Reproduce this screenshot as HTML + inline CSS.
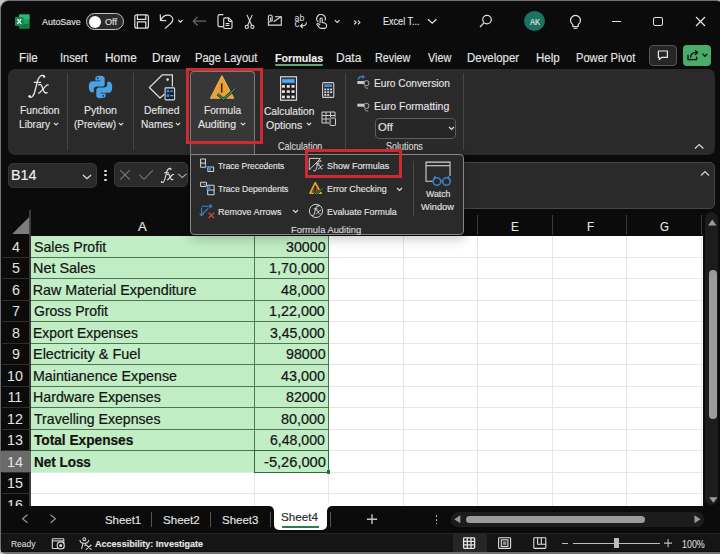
<!DOCTYPE html><html><head><meta charset="utf-8"><style>
html,body{margin:0;padding:0;}
body{width:720px;height:554px;overflow:hidden;position:relative;background:#c4c4cc;font-family:"Liberation Sans",sans-serif;}
.a{position:absolute;}
.t{position:absolute;white-space:nowrap;line-height:1;-webkit-text-stroke:0.12px currentColor;}
.n{-webkit-text-stroke:0;}
.d{-webkit-text-stroke:0.22px currentColor;}
</style></head><body>
<div class="a" style="left:0;top:0;width:725px;height:554px;background:#717171;border-radius:9px 9px 6px 6px;"></div>
<div class="a" style="left:1.2px;top:1.2px;width:722.6px;height:551.2px;background:#0b0b0b;border-radius:8px 8px 5px 5px;"></div>
<svg class="a" style="left:15px;top:14px;" width="15" height="15" viewBox="0 0 15 15"><rect x="4" y="0.5" width="10.5" height="14" rx="1.2" fill="#1d9f5c"/><rect x="4" y="0.5" width="10.5" height="4.7" fill="#2bb673"/><rect x="4" y="9.8" width="10.5" height="4.7" fill="#137a43"/><rect x="0" y="3" width="8.5" height="9" rx="1" fill="#168a4a"/><path d="M2.3 5.2 L6.2 9.8 M6.2 5.2 L2.3 9.8" stroke="#fff" stroke-width="1.3"/></svg>
<div class="t " style="left:42.00px;top:16.96px;font-size:9.5px;color:#e6e6e6;transform:scaleX(0.9390);transform-origin:0 0;">AutoSave</div>
<div class="a" style="left:86px;top:12.5px;width:38px;height:17.5px;box-sizing:border-box;border:1.4px solid #c4c4c4;border-radius:9px;background:#2b2b2b;"></div>
<div class="a" style="left:89px;top:15.5px;width:12px;height:12px;background:#fff;border-radius:50%;"></div>
<div class="t " style="left:105.00px;top:16.70px;font-size:9.8px;color:#e6e6e6;transform:scaleX(0.9286);transform-origin:0 0;">Off</div>
<svg class="a" style="left:133px;top:13px;" width="17" height="17" viewBox="133 13 17 17"><g fill="none" stroke="#dedede" stroke-width="1.2"><rect x="134.8" y="14.8" width="13.6" height="13.4" rx="2"/><path d="M137.4 14.8 V19.3 H145.8 V14.8 M137.4 28.2 V21.9 H145.8 V28.2"/></g></svg>
<svg class="a" style="left:158px;top:13px;" width="17" height="17" viewBox="158 13 17 17"><g fill="none" stroke="#dedede" stroke-width="1.2" stroke-linecap="round"><path d="M160.3 14.9 L160.5 20.4 L165.8 20.6"/><path d="M160.7 20.2 C162.5 16.6 165 15.1 167.6 15.1 C170.6 15.1 172.8 17.1 172.8 19.5 C172.8 21 172.1 22 171.1 23 L165.2 28.4"/></g></svg>
<svg class="a" style="left:176px;top:18px;" width="8" height="6" viewBox="176 18 8 6"><path d="M178.3 20 L180.4 22.2 L182.5 20" fill="none" stroke="#dedede" stroke-width="1.1"/></svg>
<svg class="a" style="left:191px;top:15px;" width="17" height="12" viewBox="191 15 17 12"><path d="M206 21.2 H193.4 M197.6 16.9 L193.3 21.2 L197.6 25.5" fill="none" stroke="#6c6c6c" stroke-width="1.2"/></svg>
<svg class="a" style="left:216px;top:13px;" width="18" height="17" viewBox="216 13 18 17"><g fill="none" stroke="#dedede" stroke-width="1.15"><path d="M223.4 14.6 H219.6 Q218 14.6 218 16.2 V25 Q218 26.6 219.6 26.6 H223"/><path d="M225 17.8 H228.6 L232 21.2 V27.3 Q232 28.5 230.8 28.5 H224.9 Q223.7 28.5 223.7 27.3 V19.1 Q223.7 17.8 225 17.8 Z"/><path d="M228.4 17.9 V20 Q228.4 21.3 229.7 21.3 H231.9"/><path d="M225.6 23.6 H229.4 M225.6 25.5 H229.4"/></g></svg>
<svg class="a" style="left:244px;top:14px;" width="12" height="16" viewBox="244 14 12 16"><g fill="none" stroke="#dedede" stroke-width="1.1"><path d="M247 14.9 L251.6 25.2 M252.3 14.9 L247.7 25.2"/><circle cx="246.8" cy="26.9" r="1.6"/><circle cx="252.4" cy="26.9" r="1.6"/></g></svg>
<svg class="a" style="left:267px;top:14px;" width="16" height="13" viewBox="267 14 16 13"><g fill="none" stroke="#dedede" stroke-width="1.1"><path d="M274.8 16.7 H281.3 V25.1 H268.4 V21.8"/><path d="M270.3 22.2 Q268.4 22.2 268.4 20.3 V17 Q268.4 15 270.3 15 Q272.2 15 272.2 17 V20.4 Q272.2 21.2 271.4 21.2 Q270.6 21.2 270.6 20.4 V17.4"/><path d="M273.6 21.8 L281 16.7"/></g></svg>
<svg class="a" style="left:294px;top:14px;" width="14" height="16" viewBox="294 14 14 16"><text x="294.6" y="20.9" font-family="Liberation Sans" font-size="8.8" letter-spacing="0.1" fill="#dedede">ab</text><text x="294.6" y="27.4" font-family="Liberation Sans" font-size="10" fill="#dedede">c</text><path d="M306.3 22.2 Q306.5 25.9 302.6 25.9 H300.6 M302.7 23.7 L300.5 25.9 L302.7 28.1" fill="none" stroke="#dedede" stroke-width="1.1"/></svg>
<svg class="a" style="left:315px;top:14px;" width="13" height="16" viewBox="315 14 13 16"><g fill="none" stroke="#dedede" stroke-width="1.1"><path d="M318.3 22.1 A4.3 4.3 0 1 1 324.9 20.6"/><path d="M320.1 23.3 V19 A1.05 1.05 0 0 1 322.2 19 V22.3 L325 23.2 Q326.8 23.8 326.6 25.8 L326.3 27.2 Q325.9 28.4 324.3 28.4 H321.3 Q320.3 28.4 319.5 27.6 L317.1 24.9 Q316.5 24.1 317.3 23.7 Q318 23.3 318.8 24 L320.1 25.2"/></g></svg>
<svg class="a" style="left:333px;top:18px;" width="8" height="6" viewBox="333 18 8 6"><path d="M334.8 20.1 L337.2 22.5 L339.6 20.1" fill="none" stroke="#dedede" stroke-width="1.1"/></svg>
<svg class="a" style="left:352px;top:19px;" width="10" height="7" viewBox="352 19 10 7"><path d="M354.1 20.4 L356.2 22.4 L354.1 24.4 M357.8 20.4 L359.9 22.4 L357.8 24.4" fill="none" stroke="#dedede" stroke-width="1.1"/></svg>
<div class="t " style="left:383.00px;top:16.37px;font-size:10.9px;color:#e6e6e6;transform:scaleX(0.8318);transform-origin:0 0;">Excel T...</div>
<svg class="a" style="left:427px;top:18px;" width="11" height="7" viewBox="0 0 11 7"><path d="M1 1.2 L5.2 5.2 L9.4 1.2" fill="none" stroke="#e0e0e0" stroke-width="1.3"/></svg>
<svg class="a" style="left:478px;top:14px;" width="15" height="15" viewBox="478 14 15 15"><g fill="none" stroke="#e0e0e0" stroke-width="1.2"><circle cx="487" cy="19.6" r="4.3"/><path d="M483.9 22.8 L480 27"/></g></svg>
<div class="a" style="left:524px;top:11.2px;width:21px;height:20.2px;background:#1d7262;border-radius:50%;"></div>
<div class="t " style="left:529.50px;top:17.92px;font-size:8.6px;color:#eaeaea;transform:scaleX(0.8917);transform-origin:0 0;">AK</div>
<svg class="a" style="left:569px;top:14px;" width="13" height="16" viewBox="0 0 13 16"><path d="M3.8 10.5 A5 5 0 1 1 9.2 10.5 V12.5 H3.8 Z" fill="none" stroke="#e0e0e0" stroke-width="1.2"/><path d="M4.5 14.3 H8.5" stroke="#e0e0e0" stroke-width="1.2"/></svg>
<div class="a" style="left:611.7px;top:20.6px;width:9.5px;height:1.2px;background:#e0e0e0;"></div>
<div class="a" style="left:653px;top:16.7px;width:10px;height:9.6px;box-sizing:border-box;border:1.2px solid #e0e0e0;border-radius:2px;"></div>
<svg class="a" style="left:695px;top:16px;" width="11" height="11" viewBox="0 0 11 11"><path d="M1 1 L10 10 M10 1 L1 10" stroke="#e6e6e6" stroke-width="1.2"/></svg>
<div class="t " style="left:19.03px;top:51.54px;font-size:12px;color:#e8e8e8;transform:scaleX(0.9722);transform-origin:0 0;">File</div>
<div class="t " style="left:59.58px;top:51.54px;font-size:12px;color:#e8e8e8;transform:scaleX(0.9167);transform-origin:0 0;">Insert</div>
<div class="t " style="left:105.01px;top:51.54px;font-size:12px;color:#e8e8e8;transform:scaleX(0.9919);transform-origin:0 0;">Home</div>
<div class="t " style="left:152.00px;top:51.54px;font-size:12px;color:#e8e8e8;">Draw</div>
<div class="t " style="left:195.07px;top:51.54px;font-size:12px;color:#e8e8e8;transform:scaleX(0.9254);transform-origin:0 0;">Page Layout</div>
<div class="t " style="left:375.10px;top:51.54px;font-size:12px;color:#e8e8e8;transform:scaleX(0.8974);transform-origin:0 0;">Review</div>
<div class="t " style="left:427.50px;top:51.54px;font-size:12px;color:#e8e8e8;transform:scaleX(0.9038);transform-origin:0 0;">View</div>
<div class="t " style="left:466.55px;top:51.54px;font-size:12px;color:#e8e8e8;transform:scaleX(0.9537);transform-origin:0 0;">Developer</div>
<div class="t " style="left:535.64px;top:51.54px;font-size:12px;color:#e8e8e8;transform:scaleX(0.9583);transform-origin:0 0;">Help</div>
<div class="t " style="left:575.77px;top:51.54px;font-size:12px;color:#e8e8e8;transform:scaleX(0.9266);transform-origin:0 0;">Power Pivot</div>
<div class="t " style="left:274.50px;top:51.88px;font-size:11.6px;color:#f2f2f2;font-weight:bold;transform:scaleX(0.9231);transform-origin:0 0;">Formulas</div>
<div class="t " style="left:336.00px;top:51.54px;font-size:12px;color:#e8e8e8;">Data</div>
<div class="a" style="left:274.5px;top:64.2px;width:48.5px;height:2px;background:#62a877;border-radius:1px;"></div>
<div class="a" style="left:649.4px;top:45px;width:27.3px;height:20.6px;box-sizing:border-box;border:1px solid #565656;border-radius:4px;background:#262626;"></div>
<svg class="a" style="left:655px;top:48px;" width="16" height="14" viewBox="655 48 16 14"><path d="M658.4 51 H667.4 V57.4 H661.6 L659.3 59.6 V57.4 H658.4 Z" fill="none" stroke="#e6e6e6" stroke-width="1.2" stroke-linejoin="round"/></svg>
<div class="a" style="left:683.3px;top:45px;width:27.6px;height:20.6px;background:#48ad68;border-radius:4px;"></div>
<svg class="a" style="left:685px;top:48px;" width="25" height="14" viewBox="685 48 25 14"><g fill="none" stroke="#0e0e0e" stroke-width="1.3" stroke-linecap="round" stroke-linejoin="round"><path d="M688 55.2 V59.6 H696.6 V57.2"/><path d="M690.6 57.4 Q690.8 52.8 695.2 52.6 H697.4"/><path d="M695.4 50.7 L697.6 52.6 L695.4 54.5"/><path d="M703 54.1 L705 56.2 L707 54.1"/></g></svg>
<div class="a" style="left:8.1px;top:68.9px;width:706.6px;height:86.1px;background:#2a2a2a;border-radius:7px;"></div>
<div class="a" style="left:67.2px;top:72.8px;width:1px;height:77.7px;background:#464646;"></div>
<div class="a" style="left:132.5px;top:72.8px;width:1px;height:77.7px;background:#464646;"></div>
<div class="a" style="left:344.8px;top:72.8px;width:1px;height:77.7px;background:#464646;"></div>
<div class="a" style="left:462.7px;top:72.8px;width:1px;height:77.7px;background:#464646;"></div>
<div class="t " style="left:19.50px;top:104.66px;font-size:10.8px;color:#e6e6e6;transform:scaleX(0.9561);transform-origin:0 0;">Function</div>
<div class="t " style="left:19.00px;top:118.86px;font-size:10.8px;color:#e6e6e6;transform:scaleX(0.9394);transform-origin:0 0;">Library</div>
<div class="t " style="left:84.00px;top:104.66px;font-size:10.8px;color:#e6e6e6;transform:scaleX(0.9818);transform-origin:0 0;">Python</div>
<div class="t " style="left:74.40px;top:118.86px;font-size:10.8px;color:#e6e6e6;transform:scaleX(0.9222);transform-origin:0 0;">(Preview)</div>
<div class="t " style="left:143.50px;top:104.66px;font-size:10.8px;color:#e6e6e6;transform:scaleX(0.9514);transform-origin:0 0;">Defined</div>
<div class="t " style="left:140.50px;top:118.86px;font-size:10.8px;color:#e6e6e6;transform:scaleX(0.9412);transform-origin:0 0;">Names</div>
<div class="a" style="left:190px;top:70.7px;width:65px;height:83.5px;box-sizing:border-box;border:1px solid #7a7a7a;border-bottom:none;border-radius:4px 4px 0 0;background:#373737;"></div>
<div class="t " style="left:203.50px;top:104.66px;font-size:10.8px;color:#e6e6e6;transform:scaleX(0.9375);transform-origin:0 0;">Formula</div>
<div class="t " style="left:197.50px;top:118.86px;font-size:10.8px;color:#e6e6e6;transform:scaleX(0.9744);transform-origin:0 0;">Auditing</div>
<div class="t " style="left:263.70px;top:105.86px;font-size:10.8px;color:#e6e6e6;transform:scaleX(0.9434);transform-origin:0 0;">Calculation</div>
<div class="t " style="left:265.80px;top:119.86px;font-size:10.8px;color:#e6e6e6;transform:scaleX(0.9730);transform-origin:0 0;">Options</div>
<svg class="a" style="left:52.5px;top:122.3px;" width="6" height="4" viewBox="0 0 6 4"><path d="M0.8 0.8 L3 3 L5.2 0.8" fill="none" stroke="#e0e0e0" stroke-width="1.1"/></svg>
<svg class="a" style="left:118px;top:122.3px;" width="6" height="4" viewBox="0 0 6 4"><path d="M0.8 0.8 L3 3 L5.2 0.8" fill="none" stroke="#e0e0e0" stroke-width="1.1"/></svg>
<svg class="a" style="left:174.5px;top:122.3px;" width="6" height="4" viewBox="0 0 6 4"><path d="M0.8 0.8 L3 3 L5.2 0.8" fill="none" stroke="#e0e0e0" stroke-width="1.1"/></svg>
<svg class="a" style="left:239.5px;top:122.3px;" width="6" height="4" viewBox="0 0 6 4"><path d="M0.8 0.8 L3 3 L5.2 0.8" fill="none" stroke="#e0e0e0" stroke-width="1.1"/></svg>
<svg class="a" style="left:305.5px;top:122.3px;" width="6" height="4" viewBox="0 0 6 4"><path d="M0.8 0.8 L3 3 L5.2 0.8" fill="none" stroke="#e0e0e0" stroke-width="1.1"/></svg>
<svg class="a" style="left:0px;top:0px;pointer-events:none;" width="720" height="554" viewBox="0 0 720 554"><g transform="translate(28.3,74.5) scale(1.0) translate(-28.3,-74.5)"><g fill="none" stroke="#e6e6e6" stroke-linecap="round" stroke-width="1.300"><path d="M29.2 96.6 Q30.8 98.3 32.6 96.4 Q34.4 94.2 35.6 88.5 L37.6 80.5 Q39.6 74.8 43.4 75.4"/><path d="M34.3 82.3 H40.5"/><path d="M38.7 84.9 Q40.9 83.5 41.9 86.2 L43.8 91.2 Q44.8 93.8 47.2 92.6"/><path d="M48.2 85 Q47.4 84.6 46.4 85.4 L39.8 92.6 Q39.2 93.3 38.6 93"/></g><circle cx="44" cy="76.6" r="1.25" fill="#e6e6e6"/><circle cx="29.6" cy="96.2" r="1.2" fill="#e6e6e6"/></g></svg>
<svg class="a" style="left:87.5px;top:74.5px;" width="25" height="24" viewBox="0 0 25 24"><path d="M12.3 0.8 C7 0.8 7.4 3 7.4 3 V5.5 H12.5 V6.3 H4.3 C4.3 6.3 0.8 6 0.8 11.8 C0.8 17.5 3.8 17.3 3.8 17.3 H5.8 V14.6 C5.8 14.6 5.7 11.6 8.7 11.6 H13.8 C13.8 11.6 16.7 11.7 16.7 8.8 V3.6 C16.7 3.6 17.1 0.8 12.3 0.8 Z" fill="#4aa2e6"/><path d="M12.7 23.2 C18 23.2 17.6 21 17.6 21 V18.5 H12.5 V17.7 H20.7 C20.7 17.7 24.2 18 24.2 12.2 C24.2 6.5 21.2 6.7 21.2 6.7 H19.2 V9.4 C19.2 9.4 19.3 12.4 16.3 12.4 H11.2 C11.2 12.4 8.3 12.3 8.3 15.2 V20.4 C8.3 20.4 7.9 23.2 12.7 23.2 Z" fill="#4aa2e6"/><circle cx="9.8" cy="3.2" r="0.9" fill="#2a2a2a"/><circle cx="15.2" cy="20.8" r="0.9" fill="#2a2a2a"/></svg>
<svg class="a" style="left:148px;top:73px;" width="29" height="29" viewBox="148 73 29 29"><g fill="none" stroke="#dedede" stroke-width="1.2" stroke-linejoin="round"><path d="M164.2 94.2 L160 98 L149.4 87.5 L162.4 74.8 H172.4 V86.5"/></g><circle cx="167.6" cy="79.6" r="1.3" fill="#dedede"/><rect x="165.1" y="87.9" width="9.5" height="12" rx="0.8" fill="#0e2336" stroke="#dedede" stroke-width="1.1"/><g fill="#3f8fd6"><rect x="166.7" y="89.8" width="2.4" height="2.6"/><rect x="166.7" y="94.3" width="2.4" height="2.6"/></g><g stroke="#8a9aa8" stroke-width="1.1"><path d="M170.2 91.1 H173.2 M170.2 95.6 H173.2"/></g></svg>
<svg class="a" style="left:208px;top:73px;" width="30" height="28" viewBox="208 73 30 28"><path d="M221.9 75.6 L233.8 98.2 H210.4 Z" fill="#e9a135" stroke="#f3c06a" stroke-width="0.9" stroke-linejoin="round"/><path d="M221.7 83.4 V92.6" stroke="#4a2a08" stroke-width="1.7"/><path d="M217.6 94.2 L223.5 99.2 L235.2 88.6" fill="none" stroke="#1a1a1a" stroke-width="2.6"/><path d="M217.6 94.2 L223.5 99.2 L235.2 88.6" fill="none" stroke="#3fb060" stroke-width="1.1"/></svg>
<svg class="a" style="left:279px;top:75px;" width="20" height="27" viewBox="279 75 20 27"><rect x="280.6" y="76.8" width="15.9" height="23.4" fill="#202020" stroke="#dcdcdc" stroke-width="1.2"/><rect x="282" y="79" width="12.6" height="4" fill="#5aa8ee" stroke="#2f6fb0" stroke-width="0.8"/><g fill="#e8e8e8"><rect x="281.9" y="85.1" width="3" height="2.6"/><rect x="286.8" y="85.1" width="3" height="2.6"/><rect x="291.5" y="85.1" width="3" height="2.6"/><rect x="281.9" y="90.3" width="3" height="2.6"/><rect x="286.8" y="90.3" width="3" height="2.6"/><rect x="291.5" y="90.3" width="3" height="2.6"/><rect x="281.9" y="95.6" width="3" height="2.6"/><rect x="286.8" y="95.6" width="3" height="2.6"/><rect x="291.5" y="95.6" width="3" height="2.6"/></g></svg>
<svg class="a" style="left:322px;top:81.5px;" width="12.5" height="16" viewBox="0 0 12.5 16"><rect x="0.6" y="0.6" width="11.2" height="14.8" rx="1" fill="none" stroke="#cfcfcf" stroke-width="1.1"/><rect x="2.3" y="2.3" width="7.8" height="2.8" fill="#3f8fd6"/><g fill="#d8d8d8"><rect x="2.3" y="6.5" width="2" height="1.8"/><rect x="5.2" y="6.5" width="2" height="1.8"/><rect x="8.1" y="6.5" width="2" height="1.8"/><rect x="2.3" y="9.3" width="2" height="1.8"/><rect x="5.2" y="9.3" width="2" height="1.8"/><rect x="8.1" y="9.3" width="2" height="1.8"/><rect x="2.3" y="12" width="2" height="1.8"/><rect x="5.2" y="12" width="2" height="1.8"/></g></svg>
<svg class="a" style="left:320.5px;top:110.5px;" width="15.5" height="15" viewBox="0 0 15.5 15"><path d="M1 1 H14 V6 M1 1 V12 H8 M1 4.5 H14 M1 8 H8 M5 1 V12 M9.5 1 V6" fill="none" stroke="#cfcfcf" stroke-width="1"/><rect x="9" y="7" width="5.5" height="7.5" rx="0.6" fill="none" stroke="#cfcfcf" stroke-width="1"/></svg>
<div class="t " style="left:277.60px;top:142.48px;font-size:10.3px;color:#dcdcdc;transform:scaleX(0.8706);transform-origin:0 0;">Calculation</div>
<svg class="a" style="left:355px;top:74px;" width="16" height="17" viewBox="355 74 16 17"><path d="M358.2 79.6 Q358.8 76.6 362 76.6 L363.4 76.6 M362.2 75.4 L364 76.8 L362.2 78.4" fill="none" stroke="#3a79b8" stroke-width="1.5"/><rect x="357.3" y="81" width="7.2" height="3" fill="#c4c8cc"/><circle cx="366.4" cy="83.2" r="2.6" fill="none" stroke="#b8b8b8" stroke-width="0.9"/><path d="M364.6 86.6 Q365.2 88.8 368.2 88.2" fill="none" stroke="#a8a8a8" stroke-width="0.9"/></svg>
<div class="t " style="left:373.90px;top:77.56px;font-size:10.8px;color:#e6e6e6;transform:scaleX(0.9425);transform-origin:0 0;">Euro Conversion</div>
<svg class="a" style="left:355px;top:97px;" width="16" height="17" viewBox="355 97 16 17"><rect x="357.3" y="103.7" width="7.2" height="3" fill="#c4c8cc"/><circle cx="366.4" cy="105.9" r="2.6" fill="none" stroke="#b8b8b8" stroke-width="0.9"/><path d="M364.6 109.3 Q365.2 111.5 368.2 110.9" fill="none" stroke="#a8a8a8" stroke-width="0.9"/></svg>
<div class="t " style="left:373.90px;top:100.66px;font-size:10.8px;color:#e6e6e6;transform:scaleX(0.9727);transform-origin:0 0;">Euro Formatting</div>
<div class="a" style="left:375.3px;top:117.6px;width:81.2px;height:21.1px;box-sizing:border-box;border:1px solid #5c5c5c;border-radius:4px;background:#262626;"></div>
<div class="t " style="left:378.00px;top:122.19px;font-size:11px;color:#e6e6e6;transform:scaleX(1.0267);transform-origin:0 0;">Off</div>
<svg class="a" style="left:448px;top:126px;" width="7" height="5" viewBox="0 0 7 5"><path d="M1 1 L3.5 3.5 L6 1" fill="none" stroke="#e0e0e0" stroke-width="1.2"/></svg>
<div class="t " style="left:385.60px;top:142.48px;font-size:10.3px;color:#dcdcdc;transform:scaleX(0.8698);transform-origin:0 0;">Solutions</div>
<svg class="a" style="left:693.5px;top:143px;" width="11" height="7" viewBox="0 0 11 7"><path d="M1 5.5 L5.2 1.5 L9.4 5.5" fill="none" stroke="#d8d8d8" stroke-width="1.2"/></svg>
<div class="a" style="left:8.3px;top:162.6px;width:88.4px;height:25px;box-sizing:border-box;border:1px solid #363636;background:#2a2a2a;border-radius:5px;"></div>
<div class="t " style="left:11.46px;top:168.82px;font-size:13.8px;color:#f0f0f0;transform:scaleX(1.0417);transform-origin:0 0;">B14</div>
<svg class="a" style="left:82px;top:173.5px;" width="11" height="6" viewBox="0 0 11 6"><path d="M1 1 L5 4.6 L9 1" fill="none" stroke="#e0e0e0" stroke-width="1.2"/></svg>
<div class="a" style="left:104.4px;top:169.70000000000002px;width:2.3px;height:2.3px;background:#dcdcdc;border-radius:50%;"></div>
<div class="a" style="left:104.4px;top:174.1px;width:2.3px;height:2.3px;background:#dcdcdc;border-radius:50%;"></div>
<div class="a" style="left:104.4px;top:178.5px;width:2.3px;height:2.3px;background:#dcdcdc;border-radius:50%;"></div>
<div class="a" style="left:114.1px;top:162.4px;width:74.4px;height:25px;box-sizing:border-box;border:1px solid #3a3a3a;background:#2a2a2a;border-radius:5px;"></div>
<svg class="a" style="left:118px;top:168px;" width="14" height="13" viewBox="118 168 14 13"><path d="M120.2 170.2 L129.8 179.6 M129.8 170.2 L120.2 179.6" stroke="#7a7a7a" stroke-width="1.1"/></svg>
<svg class="a" style="left:137px;top:168px;" width="18" height="13" viewBox="137 168 18 13"><path d="M139.3 174.6 L144 179.3 L152.8 170.3" fill="none" stroke="#7a7a7a" stroke-width="1.1"/></svg>
<svg class="a" style="left:0px;top:0px;" width="720" height="554" viewBox="0 0 720 554"><g transform="translate(160.8,167.8) scale(0.64) translate(-28.3,-74.5)"><g fill="none" stroke="#e0e0e0" stroke-linecap="round" stroke-width="1.719"><path d="M29.2 96.6 Q30.8 98.3 32.6 96.4 Q34.4 94.2 35.6 88.5 L37.6 80.5 Q39.6 74.8 43.4 75.4"/><path d="M34.3 82.3 H40.5"/><path d="M38.7 84.9 Q40.9 83.5 41.9 86.2 L43.8 91.2 Q44.8 93.8 47.2 92.6"/><path d="M48.2 85 Q47.4 84.6 46.4 85.4 L39.8 92.6 Q39.2 93.3 38.6 93"/></g><circle cx="44" cy="76.6" r="1.25" fill="#e0e0e0"/><circle cx="29.6" cy="96.2" r="1.2" fill="#e0e0e0"/></g></svg>
<svg class="a" style="left:176px;top:172px;" width="12" height="7" viewBox="176 172 12 7"><path d="M178.2 173.8 L182.3 177.6 L186.4 173.8" fill="none" stroke="#b8b8b8" stroke-width="1.1"/></svg>
<div class="a" style="left:192px;top:162.3px;width:522.6px;height:46.3px;box-sizing:border-box;border:1px solid #454545;background:#2a2a2a;border-radius:5px;"></div>
<svg class="a" style="left:700px;top:170px;" width="11" height="7" viewBox="0 0 11 7"><path d="M1 5.5 L5 1.5 L9 5.5" fill="none" stroke="#d8d8d8" stroke-width="1.2"/></svg>
<div class="a" style="left:1.5px;top:235.5px;width:29.3px;height:270px;background:#0b0b0b;"></div>
<div class="a" style="left:30.8px;top:235.5px;width:672.2px;height:270.0px;background:#ffffff;"></div>
<div class="a" style="left:328.0px;top:235.5px;width:1px;height:270.0px;background:#e6e6e6;"></div>
<div class="a" style="left:402.5px;top:235.5px;width:1px;height:270.0px;background:#e6e6e6;"></div>
<div class="a" style="left:476.9px;top:235.5px;width:1px;height:270.0px;background:#e6e6e6;"></div>
<div class="a" style="left:551.9px;top:235.5px;width:1px;height:270.0px;background:#e6e6e6;"></div>
<div class="a" style="left:626.2px;top:235.5px;width:1px;height:270.0px;background:#e6e6e6;"></div>
<div class="a" style="left:701.2px;top:235.5px;width:1px;height:270.0px;background:#e6e6e6;"></div>
<div class="a" style="left:253.5px;top:472.0px;width:1px;height:33.5px;background:#e6e6e6;"></div>
<div class="a" style="left:30.8px;top:256.5px;width:672.2px;height:1px;background:#e6e6e6;"></div>
<div class="a" style="left:30.8px;top:278.0px;width:672.2px;height:1px;background:#e6e6e6;"></div>
<div class="a" style="left:30.8px;top:299.5px;width:672.2px;height:1px;background:#e6e6e6;"></div>
<div class="a" style="left:30.8px;top:321.0px;width:672.2px;height:1px;background:#e6e6e6;"></div>
<div class="a" style="left:30.8px;top:342.5px;width:672.2px;height:1px;background:#e6e6e6;"></div>
<div class="a" style="left:30.8px;top:364.0px;width:672.2px;height:1px;background:#e6e6e6;"></div>
<div class="a" style="left:30.8px;top:385.5px;width:672.2px;height:1px;background:#e6e6e6;"></div>
<div class="a" style="left:30.8px;top:407.0px;width:672.2px;height:1px;background:#e6e6e6;"></div>
<div class="a" style="left:30.8px;top:428.5px;width:672.2px;height:1px;background:#e6e6e6;"></div>
<div class="a" style="left:30.8px;top:450.0px;width:672.2px;height:1px;background:#e6e6e6;"></div>
<div class="a" style="left:30.8px;top:471.5px;width:672.2px;height:1px;background:#e6e6e6;"></div>
<div class="a" style="left:30.8px;top:493.0px;width:672.2px;height:1px;background:#e6e6e6;"></div>
<div class="a" style="left:30.8px;top:514.5px;width:672.2px;height:1px;background:#e6e6e6;"></div>
<div class="a" style="left:30.8px;top:235.5px;width:297.7px;height:236.5px;background:#c1eec5;"></div>
<div class="a" style="left:30.8px;top:256.5px;width:297.7px;height:1px;background:#4d7556;"></div>
<div class="a" style="left:30.8px;top:278.0px;width:297.7px;height:1px;background:#4d7556;"></div>
<div class="a" style="left:30.8px;top:299.5px;width:297.7px;height:1px;background:#4d7556;"></div>
<div class="a" style="left:30.8px;top:321.0px;width:297.7px;height:1px;background:#4d7556;"></div>
<div class="a" style="left:30.8px;top:342.5px;width:297.7px;height:1px;background:#4d7556;"></div>
<div class="a" style="left:30.8px;top:364.0px;width:297.7px;height:1px;background:#4d7556;"></div>
<div class="a" style="left:30.8px;top:385.5px;width:297.7px;height:1px;background:#4d7556;"></div>
<div class="a" style="left:30.8px;top:407.0px;width:297.7px;height:1px;background:#4d7556;"></div>
<div class="a" style="left:30.8px;top:428.5px;width:297.7px;height:1px;background:#4d7556;"></div>
<div class="a" style="left:30.8px;top:450.0px;width:297.7px;height:1px;background:#4d7556;"></div>
<div class="a" style="left:253.5px;top:235.5px;width:1px;height:236.5px;background:#4d7556;"></div>
<div class="a" style="left:30.3px;top:235.5px;width:1.2px;height:236.5px;background:#53695a;"></div>
<div class="a" style="left:328.0px;top:235.5px;width:1px;height:236.5px;background:#4d7556;"></div>
<div class="a" style="left:253.5px;top:214.7px;width:1px;height:20.8px;background:#3a3a3a;"></div>
<div class="a" style="left:328.0px;top:214.7px;width:1px;height:20.8px;background:#3a3a3a;"></div>
<div class="a" style="left:402.5px;top:214.7px;width:1px;height:20.8px;background:#3a3a3a;"></div>
<div class="a" style="left:476.9px;top:214.7px;width:1px;height:20.8px;background:#3a3a3a;"></div>
<div class="a" style="left:551.9px;top:214.7px;width:1px;height:20.8px;background:#3a3a3a;"></div>
<div class="a" style="left:626.2px;top:214.7px;width:1px;height:20.8px;background:#3a3a3a;"></div>
<div class="a" style="left:701.2px;top:214.7px;width:1px;height:20.8px;background:#3a3a3a;"></div>
<div class="a" style="left:29.3px;top:209.5px;width:1.4px;height:296px;background:#3a3a3a;"></div>
<div class="a" style="left:1.5px;top:256.5px;width:28px;height:1px;background:#2e2e2e;"></div>
<div class="a" style="left:1.5px;top:278.0px;width:28px;height:1px;background:#2e2e2e;"></div>
<div class="a" style="left:1.5px;top:299.5px;width:28px;height:1px;background:#2e2e2e;"></div>
<div class="a" style="left:1.5px;top:321.0px;width:28px;height:1px;background:#2e2e2e;"></div>
<div class="a" style="left:1.5px;top:342.5px;width:28px;height:1px;background:#2e2e2e;"></div>
<div class="a" style="left:1.5px;top:364.0px;width:28px;height:1px;background:#2e2e2e;"></div>
<div class="a" style="left:1.5px;top:385.5px;width:28px;height:1px;background:#2e2e2e;"></div>
<div class="a" style="left:1.5px;top:407.0px;width:28px;height:1px;background:#2e2e2e;"></div>
<div class="a" style="left:1.5px;top:428.5px;width:28px;height:1px;background:#2e2e2e;"></div>
<div class="a" style="left:1.5px;top:450.0px;width:28px;height:1px;background:#2e2e2e;"></div>
<div class="a" style="left:1.5px;top:471.5px;width:28px;height:1px;background:#2e2e2e;"></div>
<div class="a" style="left:1.5px;top:493.0px;width:28px;height:1px;background:#2e2e2e;"></div>
<div class="a" style="left:1.2px;top:450.8px;width:29.5px;height:20.9px;background:#6a6a6a;"></div>
<svg class="a" style="left:12px;top:217px;" width="18" height="18" viewBox="0 0 18 18"><path d="M17.2 0 V17 H0.2 Z" fill="#7c7c7c"/></svg>
<div class="t " style="left:138.00px;top:219.87px;font-size:13.5px;color:#e8e8e8;transform:scaleX(0.9667);transform-origin:0 0;">A</div>
<div class="t " style="left:511.12px;top:219.87px;font-size:13.5px;color:#e8e8e8;transform:scaleX(0.8750);transform-origin:0 0;">E</div>
<div class="t " style="left:586.64px;top:219.87px;font-size:13.5px;color:#e8e8e8;transform:scaleX(0.8571);transform-origin:0 0;">F</div>
<div class="t " style="left:659.50px;top:219.87px;font-size:13.5px;color:#e8e8e8;transform:scaleX(0.8500);transform-origin:0 0;">G</div>
<div class="t n" style="left:11.97px;top:239.80px;font-size:14.3px;color:#e4e4e4;">4</div>
<div class="t n" style="left:11.97px;top:261.30px;font-size:14.3px;color:#e4e4e4;">5</div>
<div class="t n" style="left:11.97px;top:282.80px;font-size:14.3px;color:#e4e4e4;">6</div>
<div class="t n" style="left:11.97px;top:304.30px;font-size:14.3px;color:#e4e4e4;">7</div>
<div class="t n" style="left:11.97px;top:325.80px;font-size:14.3px;color:#e4e4e4;">8</div>
<div class="t n" style="left:11.97px;top:347.30px;font-size:14.3px;color:#e4e4e4;">9</div>
<div class="t n" style="left:6.94px;top:368.80px;font-size:14.3px;color:#e4e4e4;">10</div>
<div class="t n" style="left:7.47px;top:390.30px;font-size:14.3px;color:#e4e4e4;">11</div>
<div class="t n" style="left:6.94px;top:411.80px;font-size:14.3px;color:#e4e4e4;">12</div>
<div class="t n" style="left:6.94px;top:433.30px;font-size:14.3px;color:#e4e4e4;">13</div>
<div class="t n" style="left:6.94px;top:454.80px;font-size:14.3px;color:#e4e4e4;">14</div>
<div class="t n" style="left:6.94px;top:476.30px;font-size:14.3px;color:#e4e4e4;">15</div>
<div class="t n" style="left:6.94px;top:497.80px;font-size:14.3px;color:#e4e4e4;">16</div>
<div class="t d" style="left:33.80px;top:239.85px;font-size:14.3px;color:#141414;transform:scaleX(0.9878);transform-origin:0 0;">Sales Profit</div>
<div class="t d" style="left:285.50px;top:239.85px;font-size:14.3px;color:#141414;transform:scaleX(0.9950);transform-origin:0 0;">30000</div>
<div class="t d" style="left:32.79px;top:261.35px;font-size:14.3px;color:#141414;transform:scaleX(1.0066);transform-origin:0 0;">Net Sales</div>
<div class="t d" style="left:269.10px;top:261.35px;font-size:14.3px;color:#141414;transform:scaleX(1.0036);transform-origin:0 0;">1,70,000</div>
<div class="t d" style="left:32.80px;top:282.85px;font-size:14.3px;color:#141414;">Raw Material Expenditure</div>
<div class="t d" style="left:281.10px;top:282.85px;font-size:14.3px;color:#141414;transform:scaleX(1.0045);transform-origin:0 0;">48,000</div>
<div class="t d" style="left:33.80px;top:304.35px;font-size:14.3px;color:#141414;transform:scaleX(0.9803);transform-origin:0 0;">Gross Profit</div>
<div class="t d" style="left:269.10px;top:304.35px;font-size:14.3px;color:#141414;transform:scaleX(1.0036);transform-origin:0 0;">1,22,000</div>
<div class="t d" style="left:32.83px;top:325.85px;font-size:14.3px;color:#141414;transform:scaleX(0.9710);transform-origin:0 0;">Export Expenses</div>
<div class="t d" style="left:270.10px;top:325.85px;font-size:14.3px;color:#141414;transform:scaleX(0.9857);transform-origin:0 0;">3,45,000</div>
<div class="t d" style="left:32.79px;top:347.35px;font-size:14.3px;color:#141414;transform:scaleX(1.0095);transform-origin:0 0;">Electricity &amp; Fuel</div>
<div class="t d" style="left:285.50px;top:347.35px;font-size:14.3px;color:#141414;transform:scaleX(0.9950);transform-origin:0 0;">98000</div>
<div class="t d" style="left:32.80px;top:368.85px;font-size:14.3px;color:#141414;transform:scaleX(0.9951);transform-origin:0 0;">Maintianence Expense</div>
<div class="t d" style="left:281.10px;top:368.85px;font-size:14.3px;color:#141414;transform:scaleX(1.0045);transform-origin:0 0;">43,000</div>
<div class="t d" style="left:32.81px;top:390.35px;font-size:14.3px;color:#141414;transform:scaleX(0.9930);transform-origin:0 0;">Hardware Expenses</div>
<div class="t d" style="left:285.50px;top:390.35px;font-size:14.3px;color:#141414;transform:scaleX(0.9950);transform-origin:0 0;">82000</div>
<div class="t d" style="left:33.80px;top:411.85px;font-size:14.3px;color:#141414;transform:scaleX(0.9867);transform-origin:0 0;">Travelling Exepnses</div>
<div class="t d" style="left:281.10px;top:411.85px;font-size:14.3px;color:#141414;transform:scaleX(1.0045);transform-origin:0 0;">80,000</div>
<div class="t d" style="left:33.80px;top:433.35px;font-size:14.3px;color:#141414;font-weight:bold;transform:scaleX(0.9567);transform-origin:0 0;">Total Expenses</div>
<div class="t d" style="left:270.10px;top:433.35px;font-size:14.3px;color:#141414;transform:scaleX(0.9857);transform-origin:0 0;">6,48,000</div>
<div class="t d" style="left:33.80px;top:454.85px;font-size:14.3px;color:#141414;font-weight:bold;transform:scaleX(0.9417);transform-origin:0 0;">Net Loss</div>
<div class="t d" style="left:263.80px;top:454.85px;font-size:14.3px;color:#141414;transform:scaleX(1.0250);transform-origin:0 0;">-5,26,000</div>
<div class="a" style="left:253.5px;top:450.0px;width:75.5px;height:22.5px;box-sizing:border-box;border:1.2px solid #2d6a43;"></div>
<div class="a" style="left:326.6px;top:470.4px;width:3.6px;height:3.3px;background:#2d6a43;"></div>
<div class="a" style="left:703px;top:209px;width:17px;height:296.5px;background:#0b0b0b;"></div>
<div class="a" style="left:705px;top:212px;width:13px;height:293px;background:#1c1c1c;border-radius:7px;"></div>
<svg class="a" style="left:708px;top:219px;" width="9" height="7" viewBox="0 0 9 7"><path d="M4.3 0.5 L8.5 6.5 H0.1 Z" fill="#9a9a9a"/></svg>
<div class="a" style="left:708.8px;top:269.5px;width:7.9px;height:149.2px;background:#9b9b9b;border-radius:4px;"></div>
<svg class="a" style="left:708.5px;top:497px;" width="9" height="6" viewBox="0 0 9 6"><path d="M4.3 5.8 L8.5 0.2 H0.1 Z" fill="#9a9a9a"/></svg>
<div class="a" style="left:190px;top:153.5px;width:273.5px;height:81.8px;box-sizing:border-box;border:1px solid #858585;border-radius:0 4px 4px 4px;background:#2a2a2a;box-shadow:1px 4px 12px rgba(0,0,0,0.22);"></div>
<div class="t " style="left:218.00px;top:160.67px;font-size:9.6px;color:#e6e6e6;transform:scaleX(0.8789);transform-origin:0 0;">Trace Precedents</div>
<div class="t " style="left:218.00px;top:183.62px;font-size:9.6px;color:#e6e6e6;transform:scaleX(0.8962);transform-origin:0 0;">Trace Dependents</div>
<div class="t " style="left:218.00px;top:206.67px;font-size:9.6px;color:#e6e6e6;transform:scaleX(0.9397);transform-origin:0 0;">Remove Arrows</div>
<svg class="a" style="left:292.2px;top:208.8px;" width="7" height="5" viewBox="0 0 7 5"><path d="M1 1 L3.5 3.5 L6 1" fill="none" stroke="#e0e0e0" stroke-width="1.1"/></svg>
<div class="t " style="left:326.70px;top:161.17px;font-size:9.6px;color:#e6e6e6;transform:scaleX(0.9343);transform-origin:0 0;">Show Formulas</div>
<div class="t " style="left:326.70px;top:184.07px;font-size:9.6px;color:#e6e6e6;transform:scaleX(0.9328);transform-origin:0 0;">Error Checking</div>
<svg class="a" style="left:396.2px;top:186.5px;" width="7" height="5" viewBox="0 0 7 5"><path d="M1 1 L3.5 3.5 L6 1" fill="none" stroke="#e0e0e0" stroke-width="1.1"/></svg>
<div class="t " style="left:326.70px;top:206.97px;font-size:9.6px;color:#e6e6e6;transform:scaleX(0.9280);transform-origin:0 0;">Evaluate Formula</div>
<div class="a" style="left:413.3px;top:161px;width:1px;height:54.8px;background:#4a4a4a;"></div>
<div class="t " style="left:425.60px;top:189.27px;font-size:9.6px;color:#e6e6e6;transform:scaleX(0.9111);transform-origin:0 0;">Watch</div>
<div class="t " style="left:420.90px;top:201.87px;font-size:9.6px;color:#e6e6e6;transform:scaleX(0.9657);transform-origin:0 0;">Window</div>
<div class="t " style="left:291.10px;top:225.63px;font-size:9.3px;color:#dcdcdc;transform:scaleX(1.0071);transform-origin:0 0;">Formula Auditing</div>
<svg class="a" style="left:198px;top:156px;" width="18" height="18" viewBox="198 156 18 18"><g fill="none" stroke="#d6d6d6" stroke-width="1.05"><rect x="200.6" y="158.9" width="4.9" height="8.4" rx="0.5"/><path d="M200.6 163.1 H205.5"/><rect x="207.7" y="166.9" width="5.9" height="4.6" rx="0.5"/></g><path d="M204.6 164.6 L210.2 169.8 M207 169.9 H210.4 V166.6" fill="none" stroke="#3d84c6" stroke-width="1.2"/></svg>
<svg class="a" style="left:198px;top:180px;" width="18" height="17" viewBox="198 180 18 17"><g fill="none" stroke="#d6d6d6" stroke-width="1.05"><rect x="200.6" y="182.2" width="5.9" height="4.3" rx="0.5"/><rect x="207.7" y="185.2" width="6.4" height="9.6" rx="0.5"/><path d="M207.7 190 H214.1"/></g><path d="M203.4 183.8 L209.6 189.2 M206.4 189.3 H209.8 V186" fill="none" stroke="#3d84c6" stroke-width="1.2"/></svg>
<svg class="a" style="left:198px;top:203px;" width="18" height="17" viewBox="198 203 18 17"><path d="M201.6 207.5 V215.6 M199.6 213.6 L201.6 215.8 L203.6 213.6 M201.6 206.2 H211.6 M209.6 204.2 L211.8 206.2 L209.6 208.2 M202.6 214 L208.2 208.4" fill="none" stroke="#3d84c6" stroke-width="1.1"/><path d="M208.6 212.6 L214.2 218.2 M214.2 212.6 L208.6 218.2" stroke="#e0464c" stroke-width="1.2"/></svg>
<svg class="a" style="left:306px;top:155px;" width="20" height="20" viewBox="306 155 20 20"><path d="M309.3 170 V158.4 H320.6 M309.4 169.8 L320.4 158.6" fill="none" stroke="#cfcfcf" stroke-width="1"/></svg>
<svg class="a" style="left:0px;top:0px;" width="720" height="554" viewBox="0 0 720 554"><g transform="translate(313.3,160.2) scale(0.48) translate(-28.3,-74.5)"><g fill="none" stroke="#d8d8d8" stroke-linecap="round" stroke-width="1.979"><path d="M29.2 96.6 Q30.8 98.3 32.6 96.4 Q34.4 94.2 35.6 88.5 L37.6 80.5 Q39.6 74.8 43.4 75.4"/><path d="M34.3 82.3 H40.5"/><path d="M38.7 84.9 Q40.9 83.5 41.9 86.2 L43.8 91.2 Q44.8 93.8 47.2 92.6"/><path d="M48.2 85 Q47.4 84.6 46.4 85.4 L39.8 92.6 Q39.2 93.3 38.6 93"/></g><circle cx="44" cy="76.6" r="1.25" fill="#d8d8d8"/><circle cx="29.6" cy="96.2" r="1.2" fill="#d8d8d8"/></g></svg>
<svg class="a" style="left:306px;top:180px;" width="20" height="17" viewBox="306 180 20 17"><path d="M315.2 182.6 L321.3 193.3 H309.9 Z" fill="#7a5220" stroke="#eaa43a" stroke-width="1.5" stroke-linejoin="round"/><path d="M315.2 186 V190.4" stroke="#1e1608" stroke-width="1.2"/><path d="M313.2 191.3 L316.2 194.2 L322.8 188.2" fill="none" stroke="#1c1c1c" stroke-width="2.2"/><path d="M313.2 191.3 L316.2 194.2 L322.8 188.2" fill="none" stroke="#3fb060" stroke-width="1"/></svg>
<svg class="a" style="left:306px;top:201px;" width="20" height="20" viewBox="306 201 20 20"><circle cx="316" cy="210.9" r="6.6" fill="none" stroke="#d0d0d0" stroke-width="1"/></svg>
<svg class="a" style="left:0px;top:0px;" width="720" height="554" viewBox="0 0 720 554"><g transform="translate(311.4,205.2) scale(0.47) translate(-28.3,-74.5)"><g fill="none" stroke="#d8d8d8" stroke-linecap="round" stroke-width="2.021"><path d="M29.2 96.6 Q30.8 98.3 32.6 96.4 Q34.4 94.2 35.6 88.5 L37.6 80.5 Q39.6 74.8 43.4 75.4"/><path d="M34.3 82.3 H40.5"/><path d="M38.7 84.9 Q40.9 83.5 41.9 86.2 L43.8 91.2 Q44.8 93.8 47.2 92.6"/><path d="M48.2 85 Q47.4 84.6 46.4 85.4 L39.8 92.6 Q39.2 93.3 38.6 93"/></g><circle cx="44" cy="76.6" r="1.25" fill="#d8d8d8"/><circle cx="29.6" cy="96.2" r="1.2" fill="#d8d8d8"/></g></svg>
<svg class="a" style="left:423px;top:159px;" width="32" height="28" viewBox="423 159 32 28"><g fill="none" stroke="#d4d4d4" stroke-width="1.1"><path d="M432.6 181.2 H426 V162.1 H450 V176"/><path d="M426 165.7 H450"/></g><g fill="none" stroke="#3f80c2" stroke-width="1.5"><circle cx="436.9" cy="181.5" r="3.8"/><circle cx="446.5" cy="181.5" r="3.8"/><path d="M440.7 181 Q441.7 180 442.7 181 M433.2 180.6 L435.4 176.2 M450.2 180.6 L448 176.2"/></g></svg>
<div class="a" style="left:186.3px;top:68.3px;width:76.7px;height:75.8px;box-sizing:border-box;border:3px solid #cd2a31;"></div>
<div class="a" style="left:305.2px;top:149.3px;width:96.8px;height:29.2px;box-sizing:border-box;border:3px solid #cd2a31;"></div>
<div class="a" style="left:265px;top:503px;width:70px;height:12px;background:#fff;"></div>
<div class="a" style="left:1.2px;top:505.7px;width:272.4px;height:27.5px;background:#0b0b0b;border-radius:0 5px 0 0;"></div>
<div class="a" style="left:327.2px;top:505.7px;width:400px;height:27.5px;background:#0b0b0b;border-radius:5px 0 0 0;"></div>
<svg class="a" style="left:20.5px;top:514px;" width="8" height="10" viewBox="0 0 8 10"><path d="M6.5 0.8 L1.5 4.8 L6.5 8.8" fill="none" stroke="#9a9a9a" stroke-width="1.1"/></svg>
<svg class="a" style="left:48.5px;top:514px;" width="8" height="10" viewBox="0 0 8 10"><path d="M1.5 0.8 L6.5 4.8 L1.5 8.8" fill="none" stroke="#9a9a9a" stroke-width="1.1"/></svg>
<div class="t " style="left:105.20px;top:514.91px;font-size:11.8px;color:#e6e6e6;transform:scaleX(0.9676);transform-origin:0 0;">Sheet1</div>
<div class="t " style="left:163.00px;top:514.91px;font-size:11.8px;color:#e6e6e6;transform:scaleX(0.9811);transform-origin:0 0;">Sheet2</div>
<div class="t " style="left:222.40px;top:514.91px;font-size:11.8px;color:#e6e6e6;transform:scaleX(0.9730);transform-origin:0 0;">Sheet3</div>
<div class="a" style="left:151.4px;top:511.7px;width:1px;height:15.5px;background:#555;"></div>
<div class="a" style="left:210.2px;top:511.7px;width:1px;height:15.5px;background:#555;"></div>
<div class="a" style="left:269.9px;top:511.7px;width:1px;height:15.5px;background:#555;"></div>
<div class="a" style="left:330.2px;top:511.7px;width:1px;height:15.5px;background:#555;"></div>
<div class="a" style="left:273.6px;top:500px;width:53.6px;height:29.8px;background:#fff;border-radius:0 0 5px 5px;"></div>
<div class="t " style="left:281.30px;top:512.21px;font-size:11.8px;color:#262626;transform:scaleX(0.9921);transform-origin:0 0;">Sheet4</div>
<div class="a" style="left:281.5px;top:525.7px;width:37.8px;height:1.9px;background:#2f7a52;"></div>
<svg class="a" style="left:365px;top:513px;" width="14" height="12" viewBox="365 513 14 12"><path d="M372 514.3 V524 M366.9 519.2 H377.1" stroke="#c4c4c4" stroke-width="1.4"/></svg>
<div class="a" style="left:435.6px;top:515.45px;width:1.5px;height:1.5px;background:#cfcfcf;border-radius:50%;"></div>
<div class="a" style="left:435.6px;top:519.05px;width:1.5px;height:1.5px;background:#cfcfcf;border-radius:50%;"></div>
<div class="a" style="left:435.6px;top:522.55px;width:1.5px;height:1.5px;background:#cfcfcf;border-radius:50%;"></div>
<div class="a" style="left:450.7px;top:512.2px;width:253.7px;height:14.5px;background:#1c1c1c;border-radius:7px;"></div>
<svg class="a" style="left:454px;top:515px;" width="7" height="9" viewBox="0 0 7 9"><path d="M0.3 4.2 L6.3 0.2 V8.2 Z" fill="#9a9a9a"/></svg>
<div class="a" style="left:465.5px;top:515.5px;width:179.4px;height:7.2px;background:#9b9b9b;border-radius:4px;"></div>
<svg class="a" style="left:694px;top:515px;" width="7" height="9" viewBox="0 0 7 9"><path d="M6.5 4.2 L0.5 0.2 V8.2 Z" fill="#9a9a9a"/></svg>
<div class="a" style="left:1.2px;top:533px;width:720px;height:1px;background:#232323;"></div>
<div class="a" style="left:1.2px;top:534px;width:720px;height:18.3px;background:#151515;"></div>
<div class="a" style="left:1.2px;top:550.6px;width:720px;height:1.8px;background:#0e0e0e;"></div>
<div class="t " style="left:11.30px;top:538.97px;font-size:9.6px;color:#d8d8d8;transform:scaleX(0.8821);transform-origin:0 0;">Ready</div>
<svg class="a" style="left:50px;top:537px;" width="17" height="14" viewBox="50 537 17 14"><g fill="none" stroke="#d8d8d8" stroke-width="1.1"><rect x="52.3" y="538.7" width="11.5" height="9.8" rx="0.6"/><path d="M52.3 540.9 H63.8"/></g><circle cx="60.7" cy="545.4" r="3.5" fill="#0f0f0f" stroke="#d8d8d8" stroke-width="1.1"/><circle cx="60.7" cy="545.4" r="1.5" fill="#e0e0e0"/></svg>
<svg class="a" style="left:78px;top:536px;" width="15" height="15" viewBox="78 536 15 15"><g fill="none" stroke="#d8d8d8" stroke-width="1.05" stroke-linecap="round"><circle cx="84.3" cy="539.2" r="1.4"/><path d="M79.9 540.4 Q80.5 543.1 83 543.3 H85.6 Q88.1 543.1 88.7 540.4"/><path d="M83 543.3 L81.7 548.6 M85.6 543.3 L84.9 545.8"/><path d="M86.2 545 L91.2 549.4 M91.2 545 L86.2 549.4"/></g></svg>
<div class="t " style="left:95.40px;top:539.17px;font-size:9.6px;color:#e6e6e6;font-weight:bold;transform:scaleX(0.9426);transform-origin:0 0;">Accessibility: Investigate</div>
<div class="a" style="left:453.3px;top:534px;width:33.4px;height:17.8px;background:#252525;"></div>
<svg class="a" style="left:462px;top:536px;" width="15" height="14" viewBox="462 536 15 14"><g fill="none" stroke="#e6e6e6" stroke-width="1.3"><rect x="463.6" y="537.9" width="11" height="10.4" rx="0.8"/><path d="M467.3 537.9 V548.3 M471 537.9 V548.3 M463.6 541.4 H474.6 M463.6 544.8 H474.6"/></g></svg>
<svg class="a" style="left:497px;top:536px;" width="16" height="14" viewBox="497 536 16 14"><g fill="none" stroke="#e0e0e0" stroke-width="1.1"><rect x="498.6" y="537.8" width="12" height="10.6" rx="0.8"/><rect x="501.3" y="539.8" width="6.6" height="6.6"/></g><rect x="502.8" y="541.3" width="3.6" height="3.6" fill="#8a8a8a"/></svg>
<svg class="a" style="left:532px;top:536px;" width="16" height="14" viewBox="532 536 16 14"><g fill="none" stroke="#e0e0e0" stroke-width="1.1"><rect x="533.8" y="537.8" width="12" height="10.6" rx="0.8"/><path d="M537.6 537.8 V544.2 H545.8 M541.3 537.8 V544.2"/></g></svg>
<div class="a" style="left:561.8px;top:542.8px;width:6.6px;height:1.1px;background:#bdbdbd;"></div>
<div class="a" style="left:573.3px;top:542.8px;width:86.3px;height:1.1px;background:#bdbdbd;"></div>
<div class="a" style="left:614px;top:538.2px;width:4.9px;height:9.6px;background:#bdbdbd;"></div>
<svg class="a" style="left:663.5px;top:539px;" width="8.5" height="8.5" viewBox="0 0 8.5 8.5"><path d="M4.1 0 V8.3 M0 4.1 H8.3" stroke="#bdbdbd" stroke-width="1.1"/></svg>
<div class="t " style="left:682.20px;top:539.03px;font-size:10.6px;color:#d8d8d8;transform:scaleX(0.8407);transform-origin:0 0;">100%</div>
</body></html>
